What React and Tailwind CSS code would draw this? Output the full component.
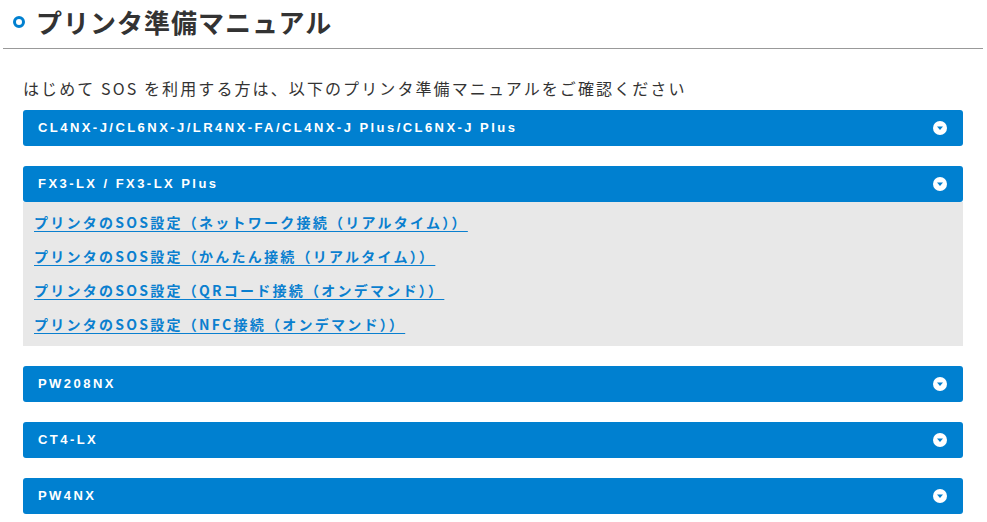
import React from 'react';

const jp = { fontFamily: '"Noto Sans CJK JP", "Noto Sans", sans-serif' };

const printers = [
    { name: 'CL4NX-J/CL6NX-J/LR4NX-FA/CL4NX-J Plus/CL6NX-J Plus', links: [] },
    {
        name: 'FX3-LX / FX3-LX Plus',
        links: [
            'プリンタのSOS設定（ネットワーク接続（リアルタイム））',
            'プリンタのSOS設定（かんたん接続（リアルタイム））',
            'プリンタのSOS設定（QRコード接続（オンデマンド））',
            'プリンタのSOS設定（NFC接続（オンデマンド））',
        ],
    },
    { name: 'PW208NX', links: [] },
    { name: 'CT4-LX', links: [] },
    { name: 'PW4NX', links: [] },
];

// white circle with a small blue triangle
const ToggleIcon = () => (
    <svg width="14" height="14" viewBox="0 0 14 14">
        <circle cx="7" cy="7" r="7" fill="#ffffff" />
        <path d="M4 5.5 L10 5.5 L7 9 Z" fill="#0080d0" />
    </svg>
);

const Section = ({ item }) => (
    <div>
        <div className="flex items-center justify-between h-[36px] pl-[15px] pr-[16px] bg-[#0080d0] rounded-[3px]">
            <span
                className="text-white font-bold text-[13px] tracking-[2.45px]"
                style={{ fontFamily: '"Liberation Sans", Arial, sans-serif' }}
            >
                {item.name}
            </span>
            <ToggleIcon />
        </div>
        {item.links.length > 0 && (
            <div className="bg-[#e8e8e8] pl-[11px] pt-[3px] pb-[5px]">
                {item.links.map((l) => (
                    <div key={l} className="h-[34px] flex items-center">
                        <a
                            href="#"
                            className="text-[#0a7fcf] font-bold text-[14px] tracking-[2.25px] underline underline-offset-[3px]"
                            style={jp}
                        >
                            {l}
                        </a>
                    </div>
                ))}
            </div>
        )}
    </div>
);

export default function App() {
    return (
        <div className="w-full min-h-screen bg-white text-[#333]" style={jp}>
            {/* Heading */}
            <div className="flex items-center h-[48px] pl-[13px] pb-[5px]">
                <span className="w-[12px] h-[12px] rounded-full border-[3px] border-[#0080d0] mr-[11px]" />
                <h1 className="text-[26px] font-bold tracking-[1px] leading-none text-[#333]">プリンタ準備マニュアル</h1>
            </div>
            <div className="mx-[3px] mr-[4px] h-px bg-[#999]" />

            <div className="pl-[23px] pr-[24px] pt-[28px]">
                <p className="text-[16px] tracking-[2.1px] leading-[22px] mb-[11px]">
                    はじめて SOS を利用する方は、以下のプリンタ準備マニュアルをご確認ください
                </p>
                <div className="flex flex-col gap-[20px]">
                    {printers.map((p) => (
                        <Section key={p.name} item={p} />
                    ))}
                </div>
            </div>
        </div>
    );
}
